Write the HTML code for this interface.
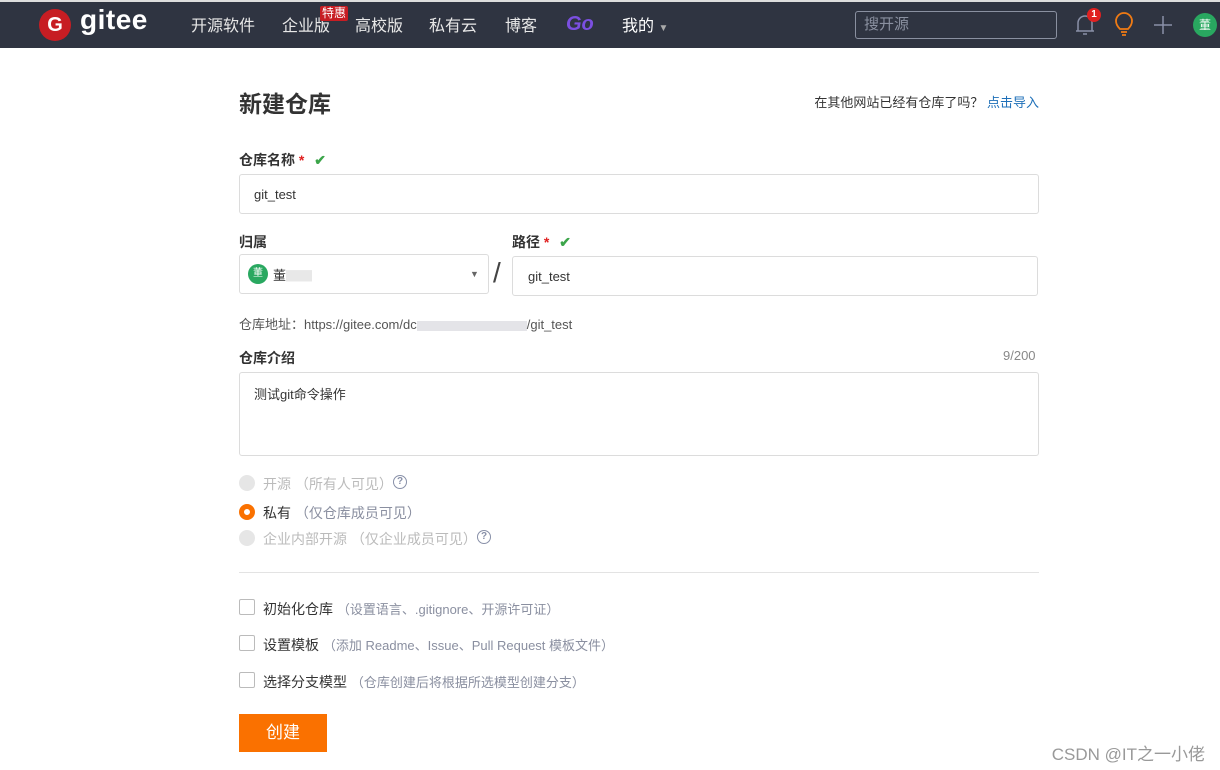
<!DOCTYPE html>
<html><head><meta charset="utf-8"><style>
*{box-sizing:border-box;margin:0;padding:0}
body{width:1220px;height:770px;background:#fff;font-family:"Liberation Sans","Noto Sans CJK SC",sans-serif;position:relative;overflow:hidden;color:#333}
.a{position:absolute}
.nav{left:0;top:0;width:1220px;height:48px;background:#2f3441;border-top:2px solid #ddd}
.nv{color:#e8e8e8;font-size:16px;top:12px}
.lbl{font-size:14px;font-weight:bold;color:#333}
.inp{border:1px solid #dcdcdc;border-radius:3px;background:#fff;font-size:13px;color:#333}
.g{color:#8a8fa0}
.chk{width:16px;height:16px;border:1px solid #bbb;border-radius:2px;background:#fff}
.rd{width:16px;height:16px;border-radius:50%;background:#e6e6e6}
.q{width:14px;height:14px;border:1.5px solid #8890a8;border-radius:50%;font-size:10px;color:#8890a8;text-align:center;line-height:11px;font-weight:bold}
</style></head><body>
<div class="a nav"></div>
<div class="a" style="left:39px;top:9px;width:32px;height:32px;border-radius:50%;background:#c71d23;color:#fff;font-weight:bold;font-size:20px;text-align:center;line-height:32px">G</div>
<div class="a" style="left:80px;top:4px;color:#fff;font-size:28px;font-weight:bold;letter-spacing:0.5px">gitee</div>
<div class="a nv" style="left:191px">开源软件</div>
<div class="a nv" style="left:282px">企业版</div>
<div class="a" style="left:320px;top:6px;background:#c71d23;color:#fff;font-size:12px;padding:0 2px;line-height:15px;border-radius:2px">特惠</div>
<div class="a nv" style="left:355px">高校版</div>
<div class="a nv" style="left:429px">私有云</div>
<div class="a nv" style="left:505px">博客</div>
<div class="a" style="left:566px;top:13px;color:#7b4fe0;font-size:20px;font-weight:bold;font-style:italic">Go</div>
<div class="a nv" style="left:622px;color:#fff">我的 <span style="font-size:10px;color:#aaa">▼</span></div>
<div class="a" style="left:855px;top:11px;width:202px;height:28px;border:1px solid #8a90a0;border-radius:3px;color:#8a90a0;font-size:15px;padding:4px 8px;line-height:18px">搜开源</div>
<svg class="a" style="left:1074px;top:12px" width="22" height="26" viewBox="0 0 22 26"><path d="M4 19 V11 a7 7 0 0 1 14 0 V19 Z M2 19 H20 M9 22 H13" fill="none" stroke="#8a90a8" stroke-width="1.5"/></svg>
<div class="a" style="left:1087px;top:8px;width:14px;height:14px;border-radius:50%;background:#e02020;color:#fff;font-size:10px;font-weight:bold;text-align:center;line-height:14px">1</div>
<svg class="a" style="left:1114px;top:12px" width="20" height="26" viewBox="0 0 20 26"><path d="M6 17 Q2 13 2 9 a8 8 0 0 1 16 0 Q18 13 14 17 Z M7 20 H13 M8 23 H12" fill="none" stroke="#f07b14" stroke-width="1.8"/></svg>
<svg class="a" style="left:1153px;top:15px" width="20" height="20"><path d="M10 1V19M1 10H19" stroke="#8a90a8" stroke-width="1.5"/></svg>
<div class="a" style="left:1193px;top:13px;width:24px;height:24px;border-radius:50%;background:#29a860;color:#fff;font-size:12px;text-align:center;line-height:24px">董</div>

<div class="a" style="left:239px;top:85px;font-size:23px;font-weight:bold;color:#333">新建仓库</div>
<div class="a" style="left:797px;top:92px;width:242px;text-align:right;font-size:13px;color:#333">在其他网站已经有仓库了吗？ <span style="color:#1d6fb8">点击导入</span></div>

<div class="a lbl" style="left:239px;top:150px">仓库名称 <span style="color:#e02020">*</span> <span style="color:#3ca54a;margin-left:6px">✔</span></div>
<div class="a inp" style="left:239px;top:174px;width:800px;height:40px;padding:12px 14px">git_test</div>

<div class="a lbl" style="left:239px;top:232px">归属</div>
<div class="a inp" style="left:239px;top:254px;width:250px;height:40px"></div>
<div class="a" style="left:248px;top:264px;width:20px;height:20px;border-radius:50%;background:#29a860;color:#fff;font-size:10px;text-align:center;line-height:20px">董</div>
<div class="a" style="left:273px;top:265px;font-size:13px">董<span style="color:#e8e8e8">▇▇</span></div>
<div class="a" style="left:470px;top:269px;font-size:9px;color:#666">▼</div>
<div class="a" style="left:493px;top:257px;font-size:28px;color:#444">/</div>
<div class="a lbl" style="left:512px;top:232px">路径 <span style="color:#e02020">*</span> <span style="color:#3ca54a;margin-left:6px">✔</span></div>
<div class="a inp" style="left:512px;top:256px;width:526px;height:40px;padding:12px 15px">git_test</div>

<div class="a" style="left:239px;top:314px;font-size:13px;color:#555">仓库地址：https://gitee.com/dc<span style="display:inline-block;width:110px;height:10px;background:#e4e4e8;vertical-align:middle"></span>/git_test</div>

<div class="a lbl" style="left:239px;top:348px">仓库介绍</div>
<div class="a" style="left:1003px;top:348px;font-size:13px;color:#888">9/200</div>
<div class="a inp" style="left:239px;top:372px;width:800px;height:84px;padding:11px 14px">测试git命令操作</div>

<div class="a rd" style="left:239px;top:475px"></div>
<div class="a" style="left:263px;top:474px;font-size:14px;color:#bbb">开源 （所有人可见）</div>
<div class="a q" style="left:393px;top:475px">?</div>
<div class="a rd" style="left:239px;top:504px;background:#fff;border:5px solid #fa7100"></div>
<div class="a" style="left:263px;top:503px;font-size:14px;color:#333">私有 <span class="g">（仅仓库成员可见）</span></div>
<div class="a rd" style="left:239px;top:530px"></div>
<div class="a" style="left:263px;top:529px;font-size:14px;color:#bbb">企业内部开源 （仅企业成员可见）</div>
<div class="a q" style="left:477px;top:530px">?</div>

<div class="a" style="left:239px;top:572px;width:800px;height:1px;background:#e3e3e3"></div>

<div class="a chk" style="left:239px;top:599px"></div>
<div class="a" style="left:263px;top:599px;font-size:14px">初始化仓库 <span class="g" style="font-size:13px">（设置语言、.gitignore、开源许可证）</span></div>
<div class="a chk" style="left:239px;top:635px"></div>
<div class="a" style="left:263px;top:635px;font-size:14px">设置模板 <span class="g" style="font-size:13px">（添加 Readme、Issue、Pull Request 模板文件）</span></div>
<div class="a chk" style="left:239px;top:672px"></div>
<div class="a" style="left:263px;top:672px;font-size:14px">选择分支模型 <span class="g" style="font-size:13px">（仓库创建后将根据所选模型创建分支）</span></div>

<div class="a" style="left:239px;top:714px;width:88px;height:38px;background:#fa7100;color:#fff;font-size:17px;text-align:center;line-height:38px">创建</div>
<div class="a" style="left:1038px;top:740px;width:167px;text-align:right;font-size:17px;color:#999;white-space:nowrap">CSDN @IT之一小佬</div>
</body></html>
